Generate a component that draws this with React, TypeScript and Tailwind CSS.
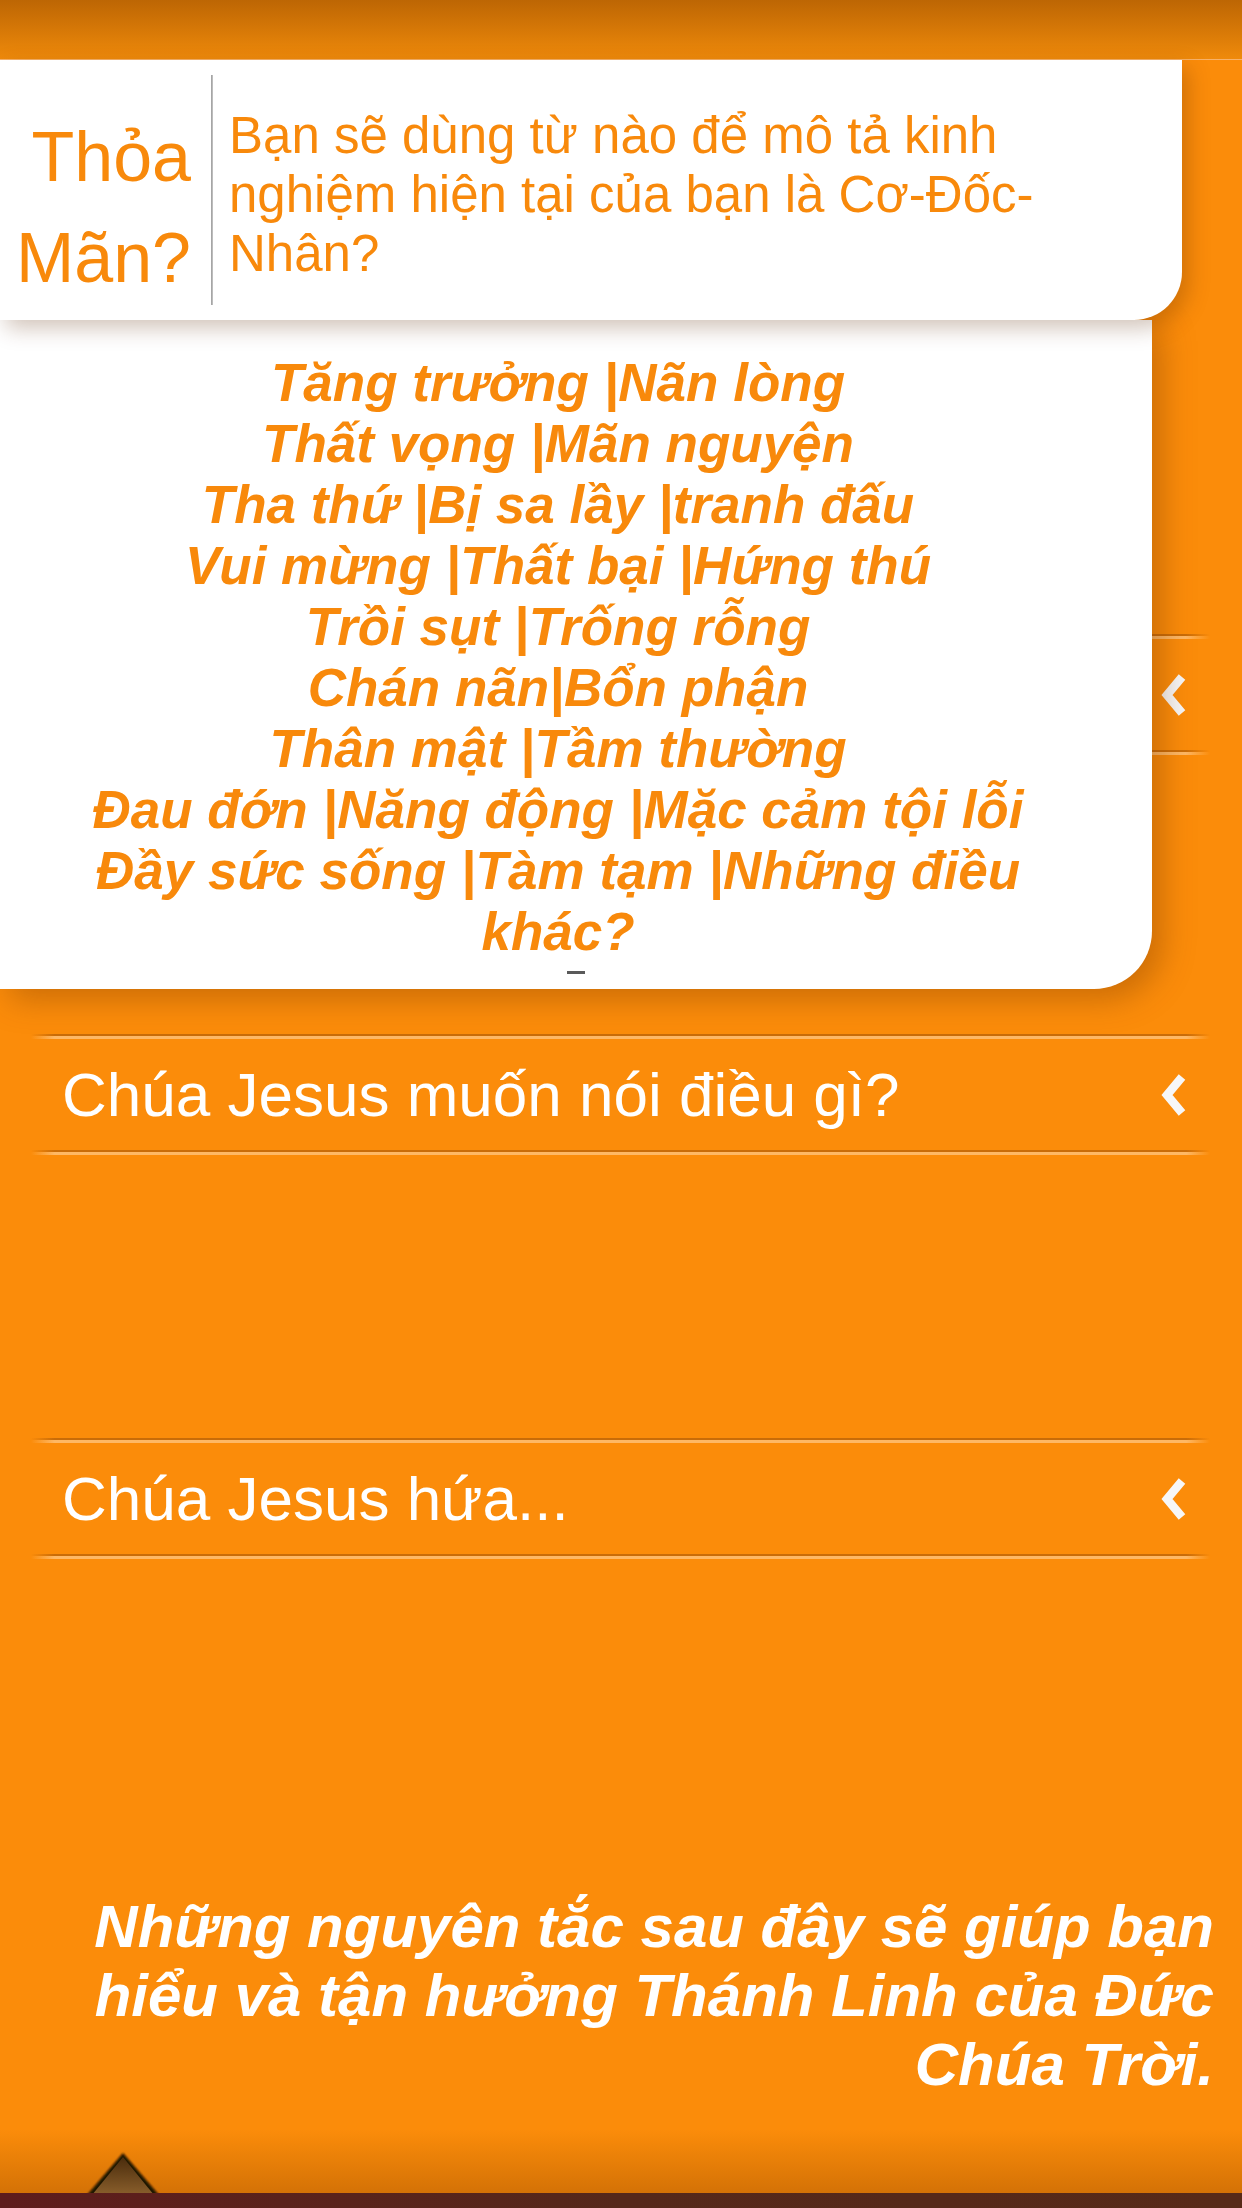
import React from "react";

const font = { fontFamily: '"Liberation Sans", Arial, sans-serif' };

function Chevron() {
  return (
    <svg width="30" height="44" viewBox="0 0 30 44" className="shrink-0">
      <polyline
        points="24,4 9,22 24,40"
        fill="none"
        stroke="#f7f7f7"
        strokeWidth="8.5"
        strokeLinecap="butt"
        strokeLinejoin="miter"
      />
    </svg>
  );
}

function Separator() {
  return (
    <div className="flex flex-col">
      <div className="h-[2px] bg-[linear-gradient(to_right,rgba(200,110,8,0)_0%,#c96c08_2%,#c96c08_98%,rgba(200,110,8,0)_100%)]" />
      <div className="h-[3px] bg-[linear-gradient(to_right,rgba(253,180,94,0)_0%,#feb865_2%,#feb865_98%,rgba(253,180,94,0)_100%)]" />
    </div>
  );
}

function Row({ title }: { title?: string }) {
  return (
    <div className="flex flex-col">
      <Separator />
      <div className="h-[111px] flex items-center justify-between pl-[31px] pr-[22px]">
        <span className="text-[62px] leading-none text-white" style={font}>
          {title}
        </span>
        <Chevron />
      </div>
      <Separator />
    </div>
  );
}

const lines = [
  "Tăng trưởng |Nãn lòng",
  "Thất vọng |Mãn nguyện",
  "Tha thứ |Bị sa lầy |tranh đấu",
  "Vui mừng |Thất bại |Hứng thú",
  "Trồi sụt |Trống rỗng",
  "Chán nãn|Bổn phận",
  "Thân mật |Tầm thường",
  "Đau đớn |Năng động |Mặc cảm tội lỗi",
  "Đầy sức sống |Tàm tạm |Những điều",
  "khác?",
];

export default function App() {
  return (
    <div
      className="w-[1242px] h-[2208px] bg-[#fb8c0a] flex flex-col overflow-hidden"
      style={font}
    >
      {/* top bar */}
      <div className="h-[60px] shrink-0 bg-gradient-to-b from-[#bd6604] to-[#ef8a0b] border-b border-[#f7b26a]" />

      {/* card 1 */}
      <div className="relative z-20 w-[1182px] h-[260px] shrink-0 bg-white rounded-br-[48px] shadow-[6px_8px_22px_rgba(90,40,0,0.28)] flex">
        <div className="w-[211px] shrink-0 pt-[47px] pr-[20px] text-right text-[70px] leading-[101px] text-[#f8890b]">
          Thỏa Mãn?
        </div>
        <div className="w-[2px] h-[230px] mt-[15px] bg-gradient-to-r from-[#9a9a9a] to-[#c8c8c8] shrink-0" />
        <div className="pl-[16px] pt-[46px] w-[880px] text-[51px] leading-[59px] text-[#f8890b]">
          Bạn sẽ dùng từ nào để mô tả kinh nghiệm hiện tại của bạn là Cơ-Đốc-Nhân?
        </div>
      </div>

      {/* card 2 with hidden row behind */}
      <div className="relative shrink-0">
        <div className="absolute left-0 right-[32px] top-[314px] z-0">
          <Row />
        </div>
        <div className="relative z-10 w-[1152px] h-[669px] bg-white rounded-br-[58px] shadow-[10px_10px_32px_rgba(110,50,0,0.35)] pt-[32px] pr-[36px] flex flex-col items-center">
          {lines.map((l) => (
            <div
              key={l}
              className="text-[53px] leading-[61px] font-bold italic text-[#f8890b] whitespace-nowrap"
            >
              {l}
            </div>
          ))}
          <div className="mt-[9px] ml-[36px] w-[18px] h-[3px] bg-[#5a5a5a]" />
        </div>
      </div>

      {/* accordion rows */}
      <div className="mt-[45px] ml-[31px] mr-[32px] flex flex-col">
        <Row title="Chúa Jesus muốn nói điều gì?" />
        <div className="h-[283px]" />
        <Row title="Chúa Jesus hứa..." />
      </div>

      {/* bottom statement */}
      <div className="mt-[333px] pr-[28px] text-right text-[60px] leading-[69px] font-bold italic text-white">
        Những nguyên tắc sau đây sẽ giúp bạn
        <br />
        hiểu và tận hưởng Thánh Linh của Đức
        <br />
        Chúa Trời.
      </div>

      <div className="flex-1" />

      {/* footer */}
      <div className="h-[63px] shrink-0 bg-gradient-to-b from-[#fb8c0a] to-[#d47206] flex items-end pl-[84px]">
        <svg width="78" height="44" viewBox="0 0 78 44">
          <defs>
            <linearGradient id="tri" x1="0" y1="0" x2="0" y2="1">
              <stop offset="0" stopColor="#4a2c0c" />
              <stop offset="1" stopColor="#8a5f2c" />
            </linearGradient>
            <filter id="blur" x="-20%" y="-20%" width="140%" height="140%">
              <feGaussianBlur stdDeviation="1.2" />
            </filter>
          </defs>
          <polygon points="39,4 3,46 75,46" fill="#1e1206" filter="url(#blur)" />
          <polygon points="39,8 8,46 70,46" fill="url(#tri)" />
        </svg>
      </div>
      <div className="h-[15px] shrink-0 bg-gradient-to-r from-[#5e1c1c] via-[#55281a] to-[#572a18]" />
    </div>
  );
}
